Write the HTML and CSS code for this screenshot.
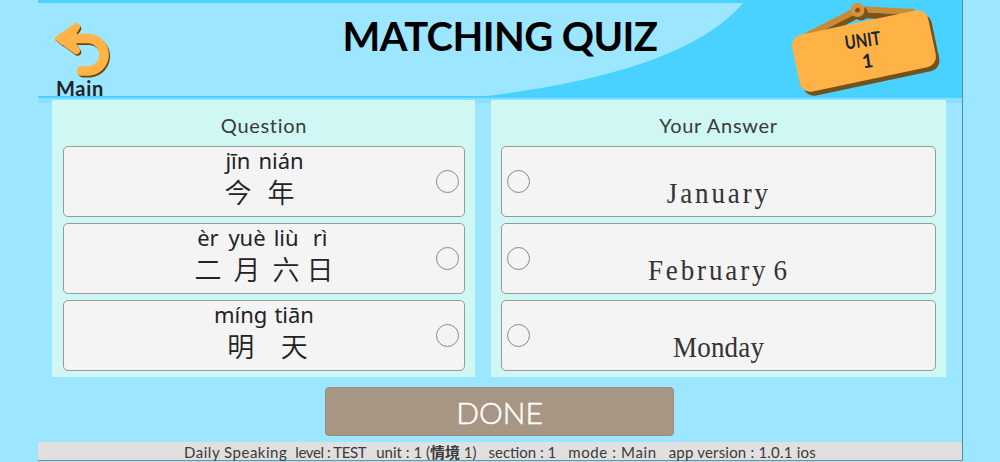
FILE: index.html
```
<!DOCTYPE html>
<html lang="en">
<head>
  <meta charset="UTF-8">
  <meta name="viewport" content="width=device-width, initial-scale=1.0">
  <title>Matching Quiz</title>
  <link rel="stylesheet" href="styles.css">
</head>
<body>
  <div class="app">
    <!-- Header -->
    <header class="header">
      <svg class="header-bg" width="923" height="98" viewBox="0 0 923 98">
        <path d="M0 3 H705 C660 56 560 82 449 96 H0 Z" fill="#9ce6ff"/>
      </svg>
      <a class="main-btn">
        <svg width="60" height="56" viewBox="52 22 60 56">
          <defs>
            <g id="back-arrow">
              <path d="M72 38.5 H89 A16.3 16.3 0 0 1 89 71 H81.5" fill="none" stroke-width="9.6" stroke-linecap="round"/>
              <path d="M60 38.5 L76.3 27 L71 35 V42 L76.3 50.5 Z" stroke-width="7.4" stroke-linejoin="round"/>
              <path d="M54 38.5 L62 32 V45 Z" stroke="none"/>
            </g>
          </defs>
          <use href="#back-arrow" x="1.2" y="1.6" fill="#6b4712" stroke="#6b4712"/>
          <use href="#back-arrow" fill="#ffb347" stroke="#ffb347"/>
        </svg>
        <span>Main</span>
      </a>
      <h1>MATCHING QUIZ</h1>
      <svg class="unit-sign" width="156" height="98" viewBox="788 0 156 98">
        <path d="M858 15 L816 37 M860 15 L920 18" stroke="#7d5219" stroke-width="6"/>
        <path d="M857 10 L806 36 M857 9 L914 12" stroke="#c98a35" stroke-width="6"/>
        <circle cx="861" cy="13.5" r="4.5" fill="none" stroke="#7d5219" stroke-width="5"/>
        <circle cx="857.5" cy="10" r="4.8" fill="none" stroke="#d6923a" stroke-width="4.6"/>
        <rect x="798" y="26" width="139" height="58" rx="11" fill="#74501a" transform="rotate(-12 867.5 55)"/>
        <rect x="794.5" y="22" width="139" height="58" rx="11" fill="#ffb347" transform="rotate(-12 864 51)"/>
        <g class="unit-text" transform="rotate(-8 864 50)">
          <text x="864" y="47" textLength="36" lengthAdjust="spacingAndGlyphs">UNIT</text>
          <text x="866" y="68">1</text>
        </g>
      </svg>
    </header>

    <!-- Quiz -->
    <main class="quiz">
      <section class="panel question">
        <h2>Question</h2>
        <div class="card">
          <div class="words">
            <div class="word"><span class="pinyin">jīn</span><span class="hanzi">今</span></div>
            <div class="word"><span class="pinyin">nián</span><span class="hanzi">年</span></div>
          </div>
          <span class="dot"></span>
        </div>
        <div class="card">
          <div class="words">
            <div class="word"><span class="pinyin">èr</span><span class="hanzi">二</span></div>
            <div class="word"><span class="pinyin">yuè</span><span class="hanzi">月</span></div>
            <div class="word"><span class="pinyin">liù</span><span class="hanzi">六</span></div>
            <div class="word"><span class="pinyin">rì</span><span class="hanzi">日</span></div>
          </div>
          <span class="dot"></span>
        </div>
        <div class="card">
          <div class="words">
            <div class="word"><span class="pinyin">míng</span><span class="hanzi">明</span></div>
            <div class="word"><span class="pinyin">tiān</span><span class="hanzi">天</span></div>
          </div>
          <span class="dot"></span>
        </div>
      </section>

      <section class="panel answer">
        <h2>Your Answer</h2>
        <div class="card"><span class="dot"></span><span class="english">January</span></div>
        <div class="card"><span class="dot"></span><span class="english">February 6</span></div>
        <div class="card"><span class="dot"></span><span class="english monday">Monday</span></div>
      </section>
    </main>

    <button class="done-btn">DONE</button>

    <footer class="status">
      <span class="app-name">Daily Speaking</span>
      <span class="level">level : TEST</span>
      <span>unit : 1 (<b>情境</b> 1)</span>
      <span>section : 1</span>
      <span class="mode">mode : Main</span>
      <span class="version">app version : 1.0.1 ios</span>
    </footer>
  </div>
</body>
</html>
```
FILE: styles.css
```
* {
  box-sizing: border-box;
}
body {
  margin: 0;
  height: 462px;
  overflow: hidden;
  background: #9ce6ff;
  font-family: Lato, "Noto Sans CJK TC", sans-serif;
  color: #3a3a3a;
}
.app {
  display: flex;
  flex-direction: column;
  width: 925px;
  height: 461px;
  margin-left: 38px;
  border-right: 1px solid #4d8fa3;
  border-bottom: 1px solid #888;
}

/* Header */
.header {
  position: relative;
  flex: none;
  height: 98px;
  background: #49d1ff;
}
.header-bg {
  position: absolute;
  left: 0;
  top: 0;
}
.main-btn {
  position: absolute;
  left: 14px;
  top: 22px;
  width: 60px;
  color: #1f2226;
  font-size: 20px;
  font-weight: 700;
  letter-spacing: 0.7px;
  line-height: 20px;
}
.main-btn svg {
  display: block;
}
.main-btn span {
  display: block;
  padding-left: 4px;
}
.header h1 {
  position: relative;
  margin: 0;
  padding-top: 12px;
  text-align: center;
  font-size: 40px;
  font-weight: 700;
  letter-spacing: -0.6px;
  line-height: 48px;
  color: #000;
}
.unit-sign {
  position: absolute;
  left: 750px;
  top: 0;
}
.unit-text {
  font-size: 19px;
  font-weight: 700;
  fill: #1c2430;
  text-anchor: middle;
}

/* Panels */
.quiz {
  display: flex;
  flex: none;
  gap: 16px;
  height: 279px;
  padding: 2px 16px 0 14px;
  background: linear-gradient(#8be0ff 5px, #9ce6ff 5px);
}
.panel {
  height: 277px;
  padding: 0 10px 0 11px;
  background: #cff7f3;
}
.question {
  width: 423px;
}
.answer {
  width: 455px;
  padding-left: 10px;
}
.panel h2 {
  margin: 0;
  height: 46px;
  text-align: center;
  font-size: 20px;
  font-weight: 400;
  letter-spacing: 0.7px;
  line-height: 50px;
}
.card {
  position: relative;
  display: flex;
  justify-content: center;
  height: 71px;
  margin-bottom: 6px;
  background: #f4f4f4;
  border: 1px solid #999;
  border-radius: 5px;
}
.dot {
  position: absolute;
  right: 5px;
  top: 23px;
  width: 23px;
  height: 23px;
  border: 1px solid #888;
  border-radius: 50%;
}
.answer .dot {
  left: 5px;
}
.words {
  display: flex;
  gap: 7px;
}
.word {
  display: flex;
  flex-direction: column;
  align-items: center;
}
.pinyin {
  font-family: "Noto Sans", sans-serif;
  font-size: 22px;
  line-height: 26px;
  color: #222;
}
.hanzi {
  font-family: "Noto Sans CJK TC", sans-serif;
  font-size: 27px;
  font-weight: 350;
  line-height: 37px;
  color: #222;
}
.english {
  padding-top: 28px;
  font-family: "Liberation Serif", "Times New Roman", serif;
  font-size: 30px;
  line-height: 36px;
  letter-spacing: 3.2px;
  word-spacing: -5px;
  color: #333;
  transform: scaleX(0.9);
}
.monday {
  letter-spacing: 0.2px;
}

/* Footer */
.done-btn {
  flex: none;
  align-self: center;
  width: 349px;
  height: 49px;
  margin: 10px 0 0 -1px;
  border: 1px solid #a08a7c;
  border-radius: 4px;
  background: #a89684;
  color: #fff;
  font-family: inherit;
  font-size: 30px;
  font-weight: 300;
  -webkit-text-stroke: 0.5px #fff;
}
.status {
  display: flex;
  justify-content: center;
  gap: 12px;
  margin-top: auto;
  height: 18px;
  background: #e0e0e0;
  font-size: 15px;
  line-height: 21px;
  white-space: nowrap;
}
.app-name {
  margin-right: -4px;
  letter-spacing: 0.5px;
}
.level {
  margin-right: -2px;
  letter-spacing: -0.4px;
}
.mode {
  letter-spacing: 0.6px;
}
.version {
  letter-spacing: 0.2px;
}
```
